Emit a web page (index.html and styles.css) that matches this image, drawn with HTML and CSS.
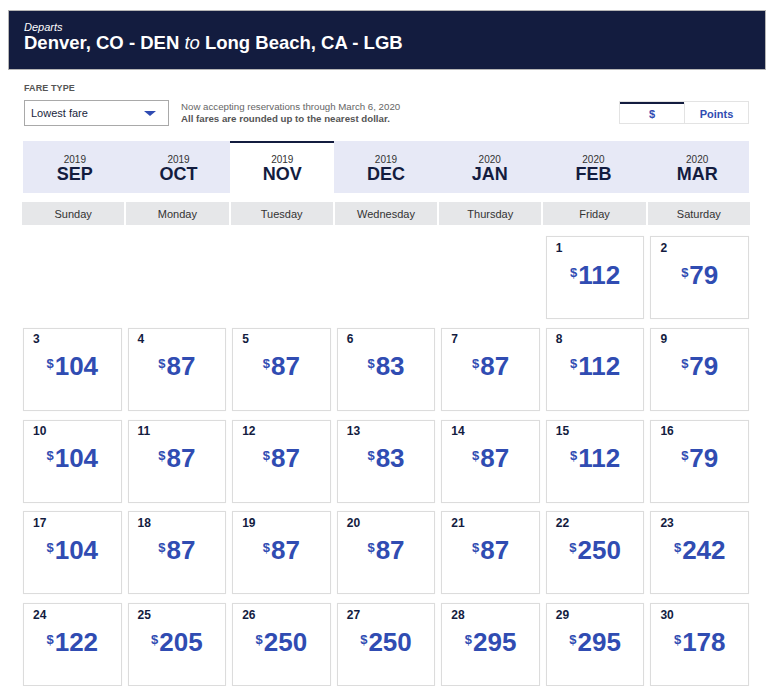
FILE: index.html
```html
<!DOCTYPE html>
<html lang="en">
<head>
<meta charset="utf-8">
<title>Low Fare Calendar</title>
<link rel="stylesheet" href="styles.css">
</head>
<body>
<header class="route">
  <div class="departs">Departs</div>
  <h1 class="route-title">Denver, CO - DEN <em>to</em> Long Beach, CA - LGB</h1>
</header>
<main class="content">
  <div class="controls">
    <div class="fare">
      <div class="fare-label">FARE TYPE</div>
      <div class="fare-row">
        <div class="select"><span>Lowest fare</span><span class="caret"></span></div>
        <div class="note">
          <p>Now accepting reservations through March 6, 2020</p>
          <p class="note-bold">All fares are rounded up to the nearest dollar.</p>
        </div>
      </div>
    </div>
    <div class="toggle"><span class="seg seg-active">$</span><span class="seg">Points</span></div>
  </div>

  <nav class="months">
    <div class="month"><span class="year">2019</span><span class="mname">SEP</span></div>
    <div class="month"><span class="year">2019</span><span class="mname">OCT</span></div>
    <div class="month month-active"><span class="year">2019</span><span class="mname">NOV</span></div>
    <div class="month"><span class="year">2019</span><span class="mname">DEC</span></div>
    <div class="month"><span class="year">2020</span><span class="mname">JAN</span></div>
    <div class="month"><span class="year">2020</span><span class="mname">FEB</span></div>
    <div class="month"><span class="year">2020</span><span class="mname">MAR</span></div>
  </nav>

  <div class="weekdays">
    <div class="wd">Sunday</div>
    <div class="wd">Monday</div>
    <div class="wd">Tuesday</div>
    <div class="wd">Wednesday</div>
    <div class="wd">Thursday</div>
    <div class="wd">Friday</div>
    <div class="wd">Saturday</div>
  </div>

  <div class="calendar">
    <div class="blank"></div><div class="blank"></div><div class="blank"></div><div class="blank"></div><div class="blank"></div>
    <div class="day"><span class="dnum">1</span><span class="price"><span class="cur">$</span>112</span></div>
    <div class="day"><span class="dnum">2</span><span class="price"><span class="cur">$</span>79</span></div>

    <div class="day"><span class="dnum">3</span><span class="price"><span class="cur">$</span>104</span></div>
    <div class="day"><span class="dnum">4</span><span class="price"><span class="cur">$</span>87</span></div>
    <div class="day"><span class="dnum">5</span><span class="price"><span class="cur">$</span>87</span></div>
    <div class="day"><span class="dnum">6</span><span class="price"><span class="cur">$</span>83</span></div>
    <div class="day"><span class="dnum">7</span><span class="price"><span class="cur">$</span>87</span></div>
    <div class="day"><span class="dnum">8</span><span class="price"><span class="cur">$</span>112</span></div>
    <div class="day"><span class="dnum">9</span><span class="price"><span class="cur">$</span>79</span></div>

    <div class="day"><span class="dnum">10</span><span class="price"><span class="cur">$</span>104</span></div>
    <div class="day"><span class="dnum">11</span><span class="price"><span class="cur">$</span>87</span></div>
    <div class="day"><span class="dnum">12</span><span class="price"><span class="cur">$</span>87</span></div>
    <div class="day"><span class="dnum">13</span><span class="price"><span class="cur">$</span>83</span></div>
    <div class="day"><span class="dnum">14</span><span class="price"><span class="cur">$</span>87</span></div>
    <div class="day"><span class="dnum">15</span><span class="price"><span class="cur">$</span>112</span></div>
    <div class="day"><span class="dnum">16</span><span class="price"><span class="cur">$</span>79</span></div>

    <div class="day"><span class="dnum">17</span><span class="price"><span class="cur">$</span>104</span></div>
    <div class="day"><span class="dnum">18</span><span class="price"><span class="cur">$</span>87</span></div>
    <div class="day"><span class="dnum">19</span><span class="price"><span class="cur">$</span>87</span></div>
    <div class="day"><span class="dnum">20</span><span class="price"><span class="cur">$</span>87</span></div>
    <div class="day"><span class="dnum">21</span><span class="price"><span class="cur">$</span>87</span></div>
    <div class="day"><span class="dnum">22</span><span class="price"><span class="cur">$</span>250</span></div>
    <div class="day"><span class="dnum">23</span><span class="price"><span class="cur">$</span>242</span></div>

    <div class="day"><span class="dnum">24</span><span class="price"><span class="cur">$</span>122</span></div>
    <div class="day"><span class="dnum">25</span><span class="price"><span class="cur">$</span>205</span></div>
    <div class="day"><span class="dnum">26</span><span class="price"><span class="cur">$</span>250</span></div>
    <div class="day"><span class="dnum">27</span><span class="price"><span class="cur">$</span>250</span></div>
    <div class="day"><span class="dnum">28</span><span class="price"><span class="cur">$</span>295</span></div>
    <div class="day"><span class="dnum">29</span><span class="price"><span class="cur">$</span>295</span></div>
    <div class="day"><span class="dnum">30</span><span class="price"><span class="cur">$</span>178</span></div>
  </div>
</main>
</body>
</html>
```

FILE: styles.css
```css
* { box-sizing: border-box; }

html, body {
  margin: 0;
  padding: 0;
  background: #ffffff;
}

body {
  font-family: "Liberation Sans", Arial, sans-serif;
  color: #333;
  width: 770px;
}

p { margin: 0; }

/* ---------- route header ---------- */
.route {
  margin: 10px 0 0 8px;
  width: 758px;
  height: 60px;
  background: #131c3f;
  border: 1px solid #b5b5b5;
  padding: 10px 15px 0 15px;
  color: #ffffff;
}

.departs {
  font-size: 11px;
  font-style: italic;
  line-height: 12px;
}

.route-title {
  margin: 1px 0 0 0;
  font-size: 18.5px;
  line-height: 17px;
  font-weight: bold;
}

.route-title em {
  font-weight: normal;
  font-style: italic;
}

/* ---------- content ---------- */
.content {
  margin-left: 22px;
  width: 728px;
}

.controls {
  display: flex;
  justify-content: space-between;
  align-items: flex-end;
  margin-top: 13px;
}

.fare-label {
  font-size: 9px;
  line-height: 11px;
  font-weight: bold;
  color: #555;
  padding-left: 2px;
  letter-spacing: 0.1px;
}

.fare-row {
  display: flex;
  align-items: center;
  margin-top: 6px;
  padding-left: 2px;
}

.select {
  width: 145px;
  height: 26px;
  border: 1px solid #a9a9a9;
  display: flex;
  align-items: center;
  justify-content: space-between;
  padding: 0 12px 0 6px;
  font-size: 11px;
  color: #1a1f3d;
}

.caret {
  width: 0;
  height: 0;
  border-left: 6.5px solid transparent;
  border-right: 6.5px solid transparent;
  border-top: 5px solid #304cb2;
}

.note {
  margin-left: 12px;
  font-size: 9.7px;
  line-height: 12px;
  color: #666;
}

.note-bold {
  font-weight: bold;
  color: #555;
}

.toggle {
  display: flex;
  margin-right: 1px;
  margin-bottom: 2px;
  border: 1px solid #e3e3e3;
  height: 23px;
}

.seg {
  width: 64px;
  display: flex;
  align-items: center;
  justify-content: center;
  font-size: 11px;
  font-weight: bold;
  color: #304cb2;
  border-top: 2px solid transparent;
}

.seg + .seg {
  border-left: 1px solid #e3e3e3;
}

.seg-active {
  border-top-color: #131c3f;
}

/* ---------- months ---------- */
.months {
  display: grid;
  grid-template-columns: repeat(7, 1fr);
  margin: 15px 1px 0 1px;
  background: #e7e9f6;
}

.month {
  height: 52px;
  border-top: 2px solid #e7e9f6;
  padding-top: 11px;
  display: flex;
  flex-direction: column;
  align-items: center;
}

.month-active {
  background: #ffffff;
  border-top-color: #131c3f;
}

.year {
  font-size: 10px;
  line-height: 11px;
  color: #333;
}

.mname {
  font-size: 18px;
  line-height: 18px;
  font-weight: bold;
  color: #131c3f;
}

/* ---------- weekdays ---------- */
.weekdays {
  display: grid;
  grid-template-columns: repeat(7, 1fr);
  column-gap: 2px;
  margin-top: 9px;
}

.wd {
  background: #e6e7e9;
  height: 23px;
  line-height: 24px;
  text-align: center;
  font-size: 11px;
  color: #333;
}

/* ---------- calendar ---------- */
.calendar {
  display: grid;
  grid-template-columns: repeat(7, 1fr);
  grid-auto-rows: 83px;
  column-gap: 6px;
  row-gap: 8.75px;
  margin: 11px 1px 0 1px;
}

.day {
  border: 1px solid #dcdcdc;
  box-shadow: 0 0 1px rgba(0, 0, 0, 0.06);
  padding: 3.5px 0 0 9px;
  display: flex;
  flex-direction: column;
  background: #fff;
}

.dnum {
  font-size: 12px;
  line-height: 14px;
  font-weight: bold;
  color: #131c3f;
}

.price {
  margin: 5px 9px 0 0;
  text-align: center;
  font-size: 26px;
  line-height: 30px;
  font-weight: bold;
  color: #304cb2;
}

.cur {
  font-size: 13px;
  line-height: 13px;
  vertical-align: 7px;
  margin-right: 1px;
}
```
